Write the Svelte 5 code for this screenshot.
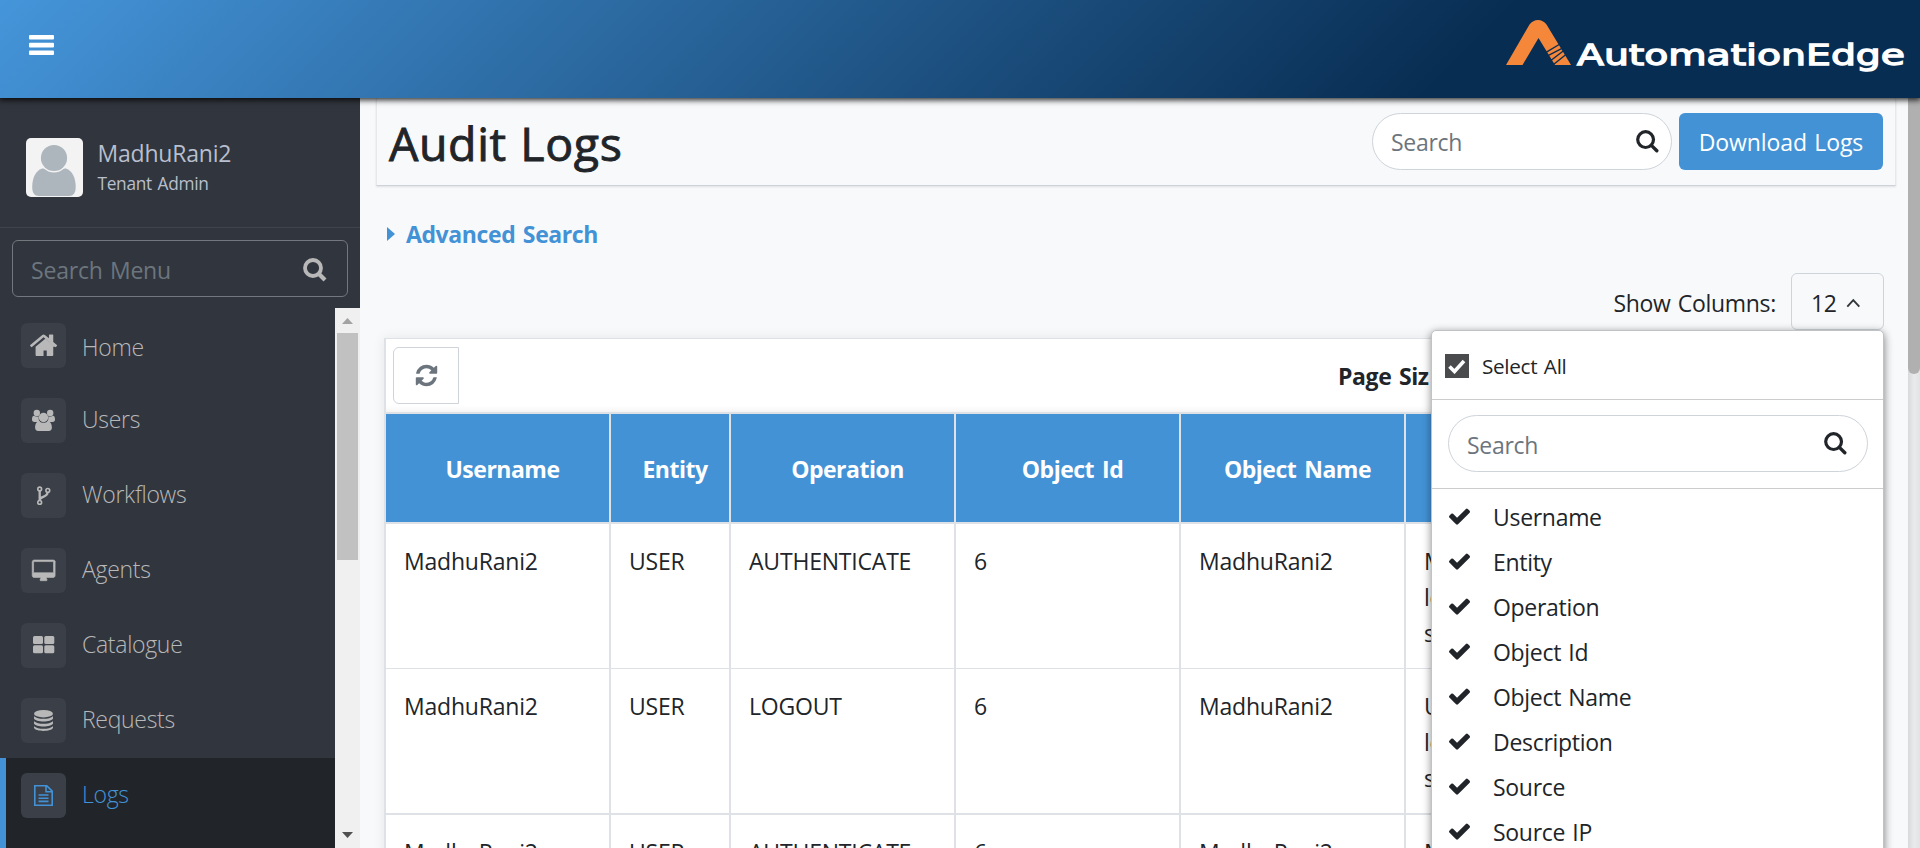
<script>
  const menu = ['Home', 'Users', 'Workflows', 'Agents', 'Catalogue', 'Requests', 'Logs'];
  const active = 'Logs';
  const headings = ['Username', 'Entity', 'Operation', 'Object Id', 'Object Name', ''];
  const rows = [
    ['MadhuRani2', 'USER', 'AUTHENTICATE', '6', 'MadhuRani2', ['M', 'lo', 's']],
    ['MadhuRani2', 'USER', 'LOGOUT', '6', 'MadhuRani2', ['U', 'lo', 's']],
    ['MadhuRani2', 'USER', 'AUTHENTICATE', '6', 'MadhuRani2', ['M']]
  ];
  const columns = ['Username', 'Entity', 'Operation', 'Object Id', 'Object Name', 'Description', 'Source', 'Source IP'];
</script>

{#snippet lens()}
  <svg class="lens" width="23" height="23" viewBox="0 0 23 23" fill="none" stroke="currentColor">
    <circle cx="9.6" cy="9.6" r="7.9" stroke-width="3.2" />
    <path d="M15.4 15.4l5.4 5.4" stroke-width="3.4" stroke-linecap="round" />
  </svg>
{/snippet}

{#snippet icon(name)}
  <svg width="45" height="45" viewBox="0 0 45 45" fill="currentColor">
    {#if name === 'Home'}
      <path transform="translate(8.6 7.2) scale(.0168)" d="M1408 992v480q0 26-19 45t-45 19h-324v-334h-190v334h-410q-26 0-45-19t-19-45v-480q0-1 .5-3t.5-3l575-474 575 474q1 2 1 6zm223-69l-62 74q-8 9-21 11h-3q-13 0-21-7l-692-577-692 577q-12 8-24 7-13-2-21-11l-62-74q-8-10-7-23.500t11-21.500l719-599q32-26 76-26t76 26l244 204v-195q0-14 9-23t23-9h192q14 0 23 9t9 23v408l219 182q10 8 11 21.500t-7 23.500z" />
    {:else if name === 'Users'}
      <circle cx="15.800" cy="15" r="3.200" /><circle cx="29.200" cy="15" r="3.200" />
      <path d="M11 21.500c0-3 1.200-4 2.500-3.600 1.800 1 3.400.9 4.300.4-.6 2.300 0 4.400 1.300 5.700h-5.600c-1.700 0-2.500-1-2.500-2.500zM34 21.500c0-3-1.200-4-2.500-3.600-1.800 1-3.400.9-4.300.4.6 2.300 0 4.400-1.300 5.700h5.600c1.700 0 2.500-1 2.500-2.500z" />
      <circle cx="22.500" cy="19.500" r="4.700" />
      <path d="M18.300 23.200c2.600 2.100 5.800 2.100 8.400 0 3 .2 4.200 3.200 4.200 6.400 0 2.200-1.200 3.400-3.100 3.400H17.200c-1.900 0-3.100-1.200-3.100-3.400 0-3.200 1.200-6.200 4.200-6.400z" />
    {:else if name === 'Workflows'}
      <g fill="none" stroke="currentColor" stroke-width="1.600">
        <circle cx="18.700" cy="16" r="1.900" /><circle cx="26.800" cy="17.400" r="1.900" /><circle cx="18.700" cy="29.400" r="1.900" />
        <path d="M18.700 18v9.500M26.500 19.500c0 5-7.600 3.700-7.600 7.300" stroke-width="2.300" />
      </g>
    {:else if name === 'Agents'}
      <path transform="translate(11 12) scale(.01245)" d="M1728 992v-832q0-13-9.500-22.500t-22.500-9.500h-1536q-13 0-22.500 9.500t-9.500 22.500v832q0 13 9.500 22.500t22.500 9.500h1536q13 0 22.500-9.500t9.500-22.500zm128-832v1088q0 66-47 113t-113 47h-544q0 37 16 77.500t32 71 16 43.500q0 26-19 45t-45 19h-448q-26 0-45-19t-19-45q0-14 16-44t32-70 16-78h-528q-66 0-113-47t-47-113v-1088q0-66 47-113t113-47h1536q66 0 113 47t47 113z" stroke="currentColor" stroke-width="50" />
    {:else if name === 'Catalogue'}
      <rect x="12" y="13" width="10" height="8" rx="1.500" /><rect x="23.300" y="13" width="10" height="8" rx="1.500" />
      <rect x="12" y="22.300" width="10" height="8" rx="1.500" /><rect x="23.300" y="22.300" width="10" height="8" rx="1.500" />
    {:else if name === 'Requests'}
      <ellipse cx="22.500" cy="15.700" rx="9.500" ry="3.700" />
      <path d="M13 18.200c3.500 3.400 15.500 3.400 19 0v2.400c-1.500 4-17.500 4-19 0zM13 23.200c3.500 3.400 15.500 3.400 19 0v2.400c-1.500 4-17.500 4-19 0zM13 28.200c3.500 3.400 15.500 3.400 19 0v1.600c-1.500 4.200-17.500 4.200-19 0z" />
    {:else}
      <path d="M13.800 12.800h12l5.400 5.400v14H13.800zM25 12.800v6h6M17.500 22h10M17.500 25.200h10M17.500 28.400h10" fill="none" stroke="currentColor" stroke-width="1.600" />
    {/if}
  </svg>
{/snippet}

<div class="page">
  <header>
    <svg class="burger" width="25" height="20" viewBox="0 0 25 20" fill="#fff">
      <rect width="25" height="4.600" rx="1" /><rect y="7.800" width="25" height="4.600" rx="1" /><rect y="15.600" width="25" height="4.400" rx="1" />
    </svg>
    <svg class="logo" width="402" height="60" viewBox="0 0 402 60">
      <path d="M0 49L23.500 8.500Q27 4 32 4T40.500 8.500L65 49H49L32.500 22 16.500 49z" fill="#f5873a" />
      <path d="M40 36.300L54 28M42 39.700L56 32.300M44.500 44.800L58.500 34M47.500 48.500L61.500 37.200" stroke="#0a2d52" stroke-width="1.400" />
      <text x="71" y="48.700" textLength="328" lengthAdjust="spacingAndGlyphs">AutomationEdge</text>
    </svg>
  </header>

  <div class="body">
    <aside>
      <div class="profile">
        <svg width="57" height="59" viewBox="0 0 57 59">
          <rect width="57" height="59" rx="5" fill="#f3f3f3" />
          <path d="M16 30.500h24c6 2 9.700 9 9.700 18.500 0 6-2.500 9-6.500 9H13c-4.500 0-6.800-3-6.800-9C6.200 39.500 10 32.500 16 30.500z" fill="#adb5bd" />
          <circle cx="28" cy="20" r="14.600" fill="#f3f3f3" /><circle cx="28" cy="20" r="13.100" fill="#adb5bd" />
        </svg>
        <div class="who"><span class="name">MadhuRani2</span><span class="role">Tenant Admin</span></div>
      </div>
      <div class="menu-search"><span>Search Menu</span>
        <svg width="24" height="24" viewBox="0 0 24 24" fill="none" stroke="currentColor"><circle cx="10" cy="10" r="8" stroke-width="3.800" /><path d="M16 16l6 6" stroke-width="4.200" /></svg>
      </div>
      <div class="menu-wrap">
        <nav>
          {#each menu as item}
            <div class="item" class:active={item === active} class:home={item === 'Home'}>
              <span class="tile">{@render icon(item)}</span><span class="label">{item}</span>
            </div>
          {/each}
          <div class="rest"></div>
        </nav>
        <div class="side-scroll">
          <svg width="11" height="6"><path d="M0 6L5.500 0 11 6z" fill="#a3a3a3" /></svg>
          <div class="side-thumb"></div>
          <svg class="down" width="11" height="6"><path d="M0 0L5.500 6 11 0z" fill="#505050" /></svg>
        </div>
      </div>
    </aside>

    <main>
      <section class="titlebar">
        <h1>Audit Logs</h1>
        <div class="pill"><span>Search</span>{@render lens()}</div>
        <button class="download">Download Logs</button>
      </section>
      <div class="advanced"><svg width="8" height="14"><path d="M0 0l8 7-8 7z" fill="#4392d6" /></svg><span>Advanced Search</span></div>
      <div class="show">
        <span class="caption">Show Columns:</span>
        <div class="count">
          <span>12</span>
          <svg width="15" height="10" viewBox="0 0 15 10" fill="none" stroke="#33373b" stroke-width="1.900"><path d="M1.300 8.600l6-6.400 6 6.400" /></svg>
          <div class="dropdown">
            <div class="all">
              <span class="box"><svg width="18" height="16" viewBox="0 0 18 16"><path d="M1.500 8.500l5 5L16 3" fill="none" stroke="#fff" stroke-width="3.600" /></svg></span>
              <span>Select All</span>
            </div>
            <div class="find"><div class="pill"><span>Search</span>{@render lens()}</div></div>
            <ul>
              {#each columns as c}
                <li>
                  <svg width="21" height="17" viewBox="121 304 1550 1228" fill="#212529"><path d="M1671 566q0 40-28 68l-724 724-136 136q-28 28-68 28t-68-28l-136-136-362-362q-28-28-28-68t28-68l136-136q28-28 68-28t68 28l294 295 656-657q28-28 68-28t68 28l136 136q28 28 28 68z" /></svg>
                  <span>{c}</span>
                </li>
              {/each}
            </ul>
          </div>
        </div>
      </div>
      <section class="card">
        <div class="tools">
          <button class="refresh" aria-label="Refresh">
            <svg width="25" height="25" viewBox="0 0 1792 1792" fill="#6c757d"><path d="M1639 1056q0 5-1 7-64 268-268 434.500t-478 166.500q-146 0-282.500-55t-243.500-157l-129 129q-19 19-45 19t-45-19-19-45v-448q0-26 19-45t45-19h448q26 0 45 19t19 45-19 45l-137 137q71 66 161 102t187 36q134 0 250-65t186-179q11-17 53-117 8-23 30-23h192q13 0 22.500 9.500t9.500 22.500zm25-800v448q0 26-19 45t-45 19h-448q-26 0-45-19t-19-45 19-45l138-138q-148-137-349-137-134 0-250 65t-186 179q-11 17-53 117-8 23-30 23h-199q-13 0-22.500-9.500t-9.500-22.500v-7q65-268 270-434.500t480-166.500q146 0 284 55.500t245 156.500l130-129q19-19 45-19t45 19 19 45z" /></svg>
          </button>
          <b>Page Siz</b>
        </div>
        <div class="row head">
          {#each headings as h}<div>{h}</div>{/each}
        </div>
        {#each rows as r}
          <div class="row">
            {#each r as cell}
              <div>{#if Array.isArray(cell)}{#each cell as line}<p>{line}</p>{/each}{:else}{cell}{/if}</div>
            {/each}
          </div>
        {/each}
      </section>
    </main>
    <div class="page-scroll"><div></div></div>
  </div>
</div>

<style>
  :global(body) { margin: 0; overflow: hidden; }
  .page { width: 1920px; height: 848px; overflow: hidden; display: flex; flex-direction: column; background: #f8f9fb; color: #212529; font: 23px/36px "Open Sans", "Noto Sans", sans-serif; letter-spacing: -.3px; word-spacing: 1.500px; }
  .page * { box-sizing: border-box; }
  svg { display: block; flex: none; }
  span { white-space: nowrap; }
  button { font: inherit; letter-spacing: inherit; word-spacing: inherit; padding: 0; }
  header { flex: none; height: 98px; position: relative; z-index: 2; display: flex; justify-content: space-between; padding: 35px 12px 0 29px; background: linear-gradient(135deg, #4595da 0%, #082d52 75.400%); box-shadow: 0 1px 6px 1px rgba(0,0,0,.85); }
  .logo { margin-top: -19px; }
  .logo text { font: 29px "DejaVu Sans", sans-serif; letter-spacing: 0; word-spacing: 0; fill: #fff; stroke: #fff; stroke-width: 1.300px; }
  .body { flex: 1; min-height: 0; display: flex; }
  aside { width: 360px; flex: none; background: #31353d; display: flex; flex-direction: column; }
  .profile { flex: none; height: 130px; border-bottom: 1px solid #3f434c; display: flex; padding: 40px 26px 0; gap: 14px; }
  .who { display: flex; flex-direction: column; color: #b8bfce; padding-left: .5px; }
  .name { line-height: 30px; letter-spacing: -.2px; }
  .role { font-size: 17.300px; line-height: 32px; letter-spacing: -.3px; }
  .menu-search { flex: none; height: 57px; margin: 12px 12px 11px; border: 1px solid #74777d; border-radius: 6px; display: flex; align-items: center; justify-content: space-between; padding: 2px 20px 0 18px; color: #6c757d; letter-spacing: -.2px; }
  .menu-search svg { color: #b8b8b8; }
  .menu-wrap { flex: 1; min-height: 0; display: flex; }
  nav { flex: 1; display: flex; flex-direction: column; }
  .item { flex: none; height: 75px; display: flex; align-items: center; gap: 16px; padding-left: 21px; color: #b8b8b8; font-weight: 300; }
  .label { padding-bottom: 3px; }
  .home .label { padding: 3px 0 0; }
  .tile { background: #3a3f48; border-radius: 6px; }
  .active { background: #212529; color: #4392d6; border-left: 6px solid #4392d6; padding-left: 15px; }
  .rest { flex: 1; background: #212529; border-left: 6px solid #4392d6; }
  .side-scroll { width: 25px; background: #f0f0f0; display: flex; flex-direction: column; align-items: center; padding: 10px 0; }
  .side-thumb { width: 21px; height: 227px; margin-top: 9px; background: #c1c1c1; }
  .down { margin-top: auto; }
  main { flex: 1; min-width: 0; padding: 0 12px 0 16px; }
  .titlebar { height: 88px; border: 1px solid #e6e8ec; border-bottom-color: #ced2d8; border-top: 0; box-shadow: 0 1px 2px rgba(0,0,0,.1); display: flex; align-items: flex-start; padding: 15px 12px 0; }
  h1 { margin: -2px auto 0 0; font-size: 46.500px; line-height: 64px; font-weight: 500; letter-spacing: .6px; word-spacing: 1px; -webkit-text-stroke: .9px currentColor; }
  .pill { height: 57px; width: 300px; border: 1px solid #ced4da; border-radius: 29px; background: #fff; display: flex; align-items: center; justify-content: space-between; padding: 1px 12px 0 18px; color: #6c757d; }
  .pill :global(.lens) { color: #212529; margin-top: -2px; }
  .download { width: 204px; height: 57px; margin-left: 7px; background: #4392d6; border: 0; border-radius: 6px; color: #fff; letter-spacing: -.1px; }
  .advanced { display: flex; align-items: center; gap: 11px; height: 36px; margin: 30px 0 0 11px; color: #4392d6; font-weight: 700; letter-spacing: -.4px; word-spacing: 2px; }
  .show { display: flex; justify-content: flex-end; align-items: center; gap: 15px; height: 57px; margin: 21px 12px 0 0; }
  .caption { padding-top: 3px; }
  .count { position: relative; width: 93px; height: 57px; border: 1px solid #ced4da; border-radius: 6px; display: flex; align-items: center; padding: 3px 0 0 19px; gap: 9px; }
  .dropdown { position: absolute; top: 56px; right: -1px; width: 453px; height: 560px; background: #fff; border: 1px solid #c0c2c5; border-radius: 5px; box-shadow: 0 2px 9px rgba(0,0,0,.45); z-index: 3; }
  .all { height: 69px; border-bottom: 1px solid #ccc; display: flex; align-items: center; gap: 13px; padding: 2px 0 0 13px; font-size: 20.700px; }
  .box { width: 24px; height: 24px; background: #4a4b4d; display: grid; place-items: center; }
  .find { height: 89px; border-bottom: 1px solid #ccc; padding: 15px 15px 0 16px; }
  .find .pill { width: 420px; padding: 2px 20px 0 18px; }
  ul { list-style: none; margin: 0; padding: 5px 0 0 17px; }
  li { height: 45px; display: flex; align-items: center; gap: 23px; }
  .card { width: 1500px; margin: 8px 0 0 8px; border: 1px solid #dee2e6; border-width: 1px 1px 0 2px; background: #fff; box-shadow: 0 0 12px rgba(0,0,0,.08); }
  .tools { height: 73px; display: flex; align-items: center; padding: 0 0 0 7px; gap: 879px; box-shadow: inset 0 -7px 8px -8px rgba(0,0,0,.12); }
  .tools b { letter-spacing: -.4px; word-spacing: 2px; white-space: nowrap; margin-top: 1px; }
  .refresh { width: 66px; height: 57px; border: 1px solid #ced4da; border-radius: 6px 0 0 6px; background: #fff; display: grid; place-items: center; }
  .row { height: 145px; display: grid; grid-template-columns: 225px 120px 225px 225px 225px 1fr; border-bottom: 1px solid #dee2e6; letter-spacing: -.2px; }
  .row:nth-child(4) { height: 146px; border-bottom-width: 2px; }
  .row > div { padding: 19px 17px 0 18px; border-right: 2px solid #dee2e6; overflow: hidden; }
  .row p { margin: 0; }
  .head { height: 112px; border: solid #dee2e6; border-width: 2px 0; }
  .head > div { background: #4392d6; color: #fff; font-weight: 700; letter-spacing: -.5px; word-spacing: 2.500px; display: grid; place-items: center; padding: 2px 0 0 10px; }
  .page-scroll { width: 12px; background: linear-gradient(90deg, #d8d9db, #e9eaec 50%, #e2e3e5); }
  .page-scroll div { height: 276px; background: #b0b0b0; border-radius: 0 0 6px 6px; }
</style>
